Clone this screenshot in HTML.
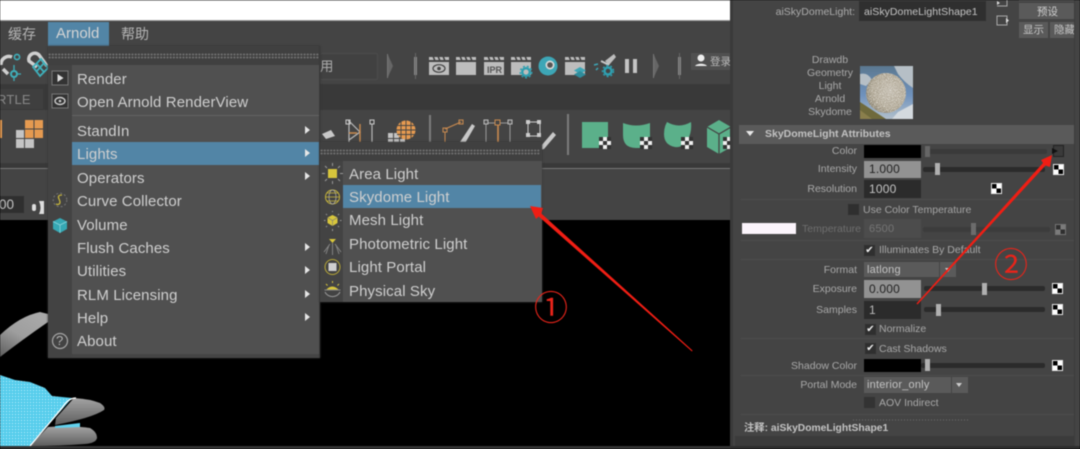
<!DOCTYPE html>
<html><head><meta charset="utf-8"><style>
html,body{margin:0;padding:0;background:#000}
#p{position:relative;width:1080px;height:449px;overflow:hidden;background:#444;font-family:"Liberation Sans","Noto Sans CJK SC",sans-serif;filter:blur(.5px)}
.a{position:absolute}
.t{position:absolute;white-space:nowrap;line-height:18px;height:18px}
.m{font-size:15px;color:#cfcfcf;left:77px;letter-spacing:.1px}
.s{font-size:15px;color:#cfcfcf;left:349px;letter-spacing:.1px}
.l{font-size:10.5px;color:#a8a8a8;right:223px;text-align:right}
.v{font-size:11px;color:#c4c4c4;letter-spacing:.2px}
.f{position:absolute;left:864px;width:57px;height:21px;background:#2b2b2b}
.tr{position:absolute;height:5px;background:#2b2b2b;border-radius:2px}
.h{position:absolute;width:5px;height:12px;background:#b0b0b0}
.ck{position:absolute;width:9px;height:9px;background:#fff;background-image:conic-gradient(#fff 25%,#000 25% 50%,#fff 50% 75%,#000 75%);background-size:9px 9px;outline:1px solid #e8e8e8}
.cb{position:absolute;width:11px;height:11px;background:#2f2f2f;border:0;color:#eee;font-size:10px;line-height:11px;text-align:center}
.ar{position:absolute;left:305px;width:0;height:0;border-left:5px solid #e6e6e6;border-top:4px solid transparent;border-bottom:4px solid transparent}
.sep{position:absolute;height:1px;background:#505050}
</style></head><body><div id="p">

<!-- top white bar -->
<div class="a" style="left:0;top:0;width:730px;height:21px;background:#fff"></div>
<div class="a" style="left:0;top:0;width:730px;height:1px;background:#c8c8c8"></div>
<div class="a" style="left:0;top:20px;width:730px;height:1px;background:#9a9a9a"></div>

<!-- maya bands -->
<div class="a" style="left:0;top:21px;width:730px;height:199px;background:#444"></div>
<div class="a" style="left:0;top:84px;width:730px;height:26px;background:#393939"></div>
<div class="a" style="left:0;top:110px;width:730px;height:53px;background:#444"></div>
<div class="a" style="left:0;top:163px;width:730px;height:5px;background:#393939"></div>
<div class="a" style="left:0;top:168px;width:730px;height:1px;background:#777"></div>
<div class="a" style="left:0;top:220px;width:730px;height:226px;background:#000"></div>
<div class="a" style="left:0;top:446px;width:730px;height:3px;background:#333"></div>

<!-- menu bar -->
<div class="t" style="left:8px;top:25px;font-size:14px;color:#b4b4b4">缓存</div>
<div class="a" style="left:48px;top:22px;width:61px;height:24px;background:#5285a6"></div>
<div class="t" style="left:56px;top:25px;font-size:15px;color:#d4d4d4">Arnold</div>
<div class="t" style="left:121px;top:25px;font-size:14px;color:#b4b4b4">帮助</div>

<!-- toolbar icons left -->
<svg class="a" style="left:0;top:50px" width="60" height="32" fill="none">
<path d="M1 15 A8 8 0 0 1 12 7" stroke="#cfcfcf" stroke-width="3.5"/><path d="M3 19 L8 24" stroke="#cfcfcf" stroke-width="3.5"/>
<circle cx="17" cy="7" r="2.6" stroke="#3fb0bb" stroke-width="1.6"/><circle cx="14" cy="24" r="3" stroke="#3fb0bb" stroke-width="2"/><path d="M14 15V20M18 24H21M14 28V31" stroke="#3fb0bb" stroke-width="1.3"/>
<path d="M37 17 L29 11 A6 6 0 0 1 39 5 L47 16" stroke="#cfcfcf" stroke-width="3.5" stroke-linejoin="round"/>
<path d="M33 17 L41 9 L48 18 L40 26 Z M36 13 L44 22 M44 13 L36 22" stroke="#3fb0bb" stroke-width="1.8"/>
</svg>
<div class="a" style="left:320px;top:53px;width:57px;height:25px;border:1px solid #4c4c4c;border-left:0;background:#414141;border-radius:2px"></div>
<div class="t" style="left:320px;top:58px;font-size:13.5px;color:#aaa">用</div>

<!-- toolbar icons right -->
<svg class="a" style="left:380px;top:46px" width="350" height="38">
<path d="M8 9 L13 20 L8 31Z" fill="#666"/><path d="M7.5 8V32" stroke="#777" stroke-width="1"/>
<rect x="34" y="11" width="3" height="18" fill="#8a8a8a"/><path d="M35.500 7V33" stroke="#666"/>
<rect x="49" y="16" width="20" height="13" fill="#bdbdbd"/><path d="M49 11h20v3H49z" fill="#bdbdbd"/><path d="M53 10l2 5M58 10l2 5M63 10l2 5" stroke="#444" stroke-width="1.6"/>
<ellipse cx="59" cy="22.500" rx="6" ry="3.800" fill="none" stroke="#444" stroke-width="1.2"/><circle cx="59" cy="22.500" r="1.800" fill="#444"/>
<rect x="76" y="16" width="20" height="13" fill="#bdbdbd"/><path d="M76 11h20v3H76z" fill="#bdbdbd"/><path d="M80 10l2 5M85 10l2 5M90 10l2 5" stroke="#444" stroke-width="1.6"/>
<rect x="104" y="16" width="20" height="13" fill="#bdbdbd"/><path d="M104 11h20v3h-20z" fill="#bdbdbd"/><path d="M108 10l2 5M113 10l2 5M118 10l2 5" stroke="#444" stroke-width="1.6"/>
<text x="107" y="27" font-size="9" font-weight="bold" fill="#555" font-family="Liberation Sans">IPR</text>
<rect x="131" y="16" width="20" height="13" fill="#bdbdbd"/><path d="M131 11h20v3h-20z" fill="#bdbdbd"/><path d="M135 10l2 5M140 10l2 5M145 10l2 5" stroke="#444" stroke-width="1.6"/>
<circle cx="146" cy="26" r="3.800" fill="none" stroke="#2f9fb0" stroke-width="2.400"/><circle cx="146" cy="26" r="5.800" fill="none" stroke="#2f9fb0" stroke-width="1.400" stroke-dasharray="2 2"/>
<circle cx="168" cy="20" r="9.500" fill="#3da6b6"/><circle cx="170" cy="19" r="4.500" fill="#d8d8d8"/><circle cx="170" cy="19" r="2.800" fill="#555"/>
<rect x="185" y="16" width="20" height="13" fill="#bdbdbd"/><path d="M185 11h20v3h-20z" fill="#bdbdbd"/><path d="M189 10l2 5M194 10l2 5M199 10l2 5" stroke="#444" stroke-width="1.6"/>
<path d="M200 21l6 3.500-6 3.500-6-3.500z" fill="#3da6b6"/><path d="M200 25l6 3.500-6 3.500-6-3.500z" fill="#2f8c9c"/>
<path d="M225 15l9-7 2 3-7 8z" fill="#bdbdbd"/><path d="M221 15l8 4" stroke="#c8c8c8" stroke-width="2"/>
<circle cx="228" cy="25" r="3.500" fill="none" stroke="#2f9fb0" stroke-width="2.400"/><circle cx="228" cy="25" r="5.500" fill="none" stroke="#2f9fb0" stroke-width="1.400" stroke-dasharray="2 2"/>
<path d="M214 19l4-1M216 24l2-2" stroke="#3da6b6" stroke-width="1.500"/>
<rect x="245" y="13" width="4" height="14" fill="#c4c4c4"/><rect x="253" y="13" width="4" height="14" fill="#c4c4c4"/>
<path d="M274 9 L279 20 L274 31Z" fill="#666"/><path d="M273.500 8V32" stroke="#777"/>
<rect x="298" y="11" width="3" height="18" fill="#8a8a8a"/><path d="M299.500 7V33" stroke="#666"/>
<rect x="311" y="7" width="39" height="17" fill="#505050"/>
<circle cx="321" cy="12" r="3.500" fill="#eee"/><path d="M315 20c2-3 10-3 12 0z" fill="#eee"/>
</svg>
<div class="t" style="left:710px;top:53px;font-size:10.5px;color:#bbb">登录</div>

<!-- second row -->
<div class="a" style="left:0;top:89px;width:43px;height:20px;background:#3f3f3f"></div>
<div class="t" style="left:-3px;top:91px;font-size:13px;color:#888;letter-spacing:.2px">RTLE</div>

<!-- shelf icons -->
<svg class="a" style="left:0;top:110px" width="730" height="56">
<rect x="-4" y="10" width="6" height="18" fill="#e59a50"/>
<g fill="#c4c4c4"><rect x="16" y="20" width="8" height="8"/><rect x="16" y="29" width="8" height="9"/><rect x="25" y="29" width="9" height="9"/></g>
<path d="M25 10h18v18H25z" fill="#e59a50"/><path d="M34 10v18M25 19h18" stroke="#444"/>
<path d="M322 24l9-4 4 6-9 3z" fill="#c8c8c8"/>
<path d="M348 11h1v23M349 11l11 11-11 8" stroke="#b8b8b8" stroke-width="1.200" fill="none"/>
<path d="M360 14v20M349 23h8" stroke="#c98a4f" stroke-width="1.400" fill="none"/>
<rect x="346" y="10" width="4" height="4" fill="none" stroke="#ccc"/><rect x="370" y="10" width="4" height="4" fill="none" stroke="#ccc"/>
<path d="M372 14v20" stroke="#b8b8b8" stroke-width="1.200"/>
<g fill="#c4c4c4"><rect x="388" y="23" width="5" height="5"/><rect x="394" y="23" width="5" height="5"/><rect x="388" y="29" width="5" height="5"/><rect x="394" y="29" width="5" height="5"/><rect x="400" y="29" width="5" height="5"/></g>
<circle cx="406" cy="20" r="9.500" fill="#e59a50"/><path d="M401 11.500V28.500M406 10.500V29.500M411 11.500V28.500M397 15.500H415M396.500 20H415.500M397 24.500H415" stroke="#444" stroke-width=".9"/>
<rect x="429" y="5" width="2" height="40" fill="#7c7c7c"/>
<path d="M445 19 L461 12" stroke="#c98a4f" stroke-width="1.200"/><rect x="443" y="18" width="4" height="4" fill="none" stroke="#c98a4f"/><rect x="459" y="10" width="4" height="4" fill="none" stroke="#c98a4f"/><path d="M445 22v12" stroke="#c98a4f"/>
<path d="M460 32L472 14l3 2-11 19-9 2z" fill="#c8c8c8"/>
<path d="M486 13H508M486 13V38M510 13V38" stroke="#999" stroke-width="1"/><path d="M498 13v25" stroke="#c98a4f" stroke-width="1.600"/>
<rect x="484" y="10" width="4" height="4" fill="#555" stroke="#bbb"/><rect x="495" y="10" width="5" height="5" fill="#444" stroke="#c98a4f"/><rect x="508" y="10" width="4" height="4" fill="#555" stroke="#bbb"/>
<path d="M528 12h12M528 12v14M540 12v14M528 26h12" stroke="#ccc"/><rect x="526" y="10" width="4" height="4" fill="#ccc"/><rect x="537" y="10" width="4" height="4" fill="#ccc"/><rect x="526" y="23" width="4" height="4" fill="#ccc"/><rect x="537" y="23" width="4" height="4" fill="#ccc"/>
<path d="M541 36l12-14 3 3-12 14-4 1z" fill="#c8c8c8"/>
<rect x="567" y="4" width="2" height="41" fill="#7c7c7c"/>
<path d="M582 12h26v26h-26z" fill="#5bb08a"/>
<path d="M623 13q13 5 27 0v25h-14q-13 0-13-13z" fill="#5bb08a"/>
<path d="M667 12q12 7 24 0 1 10-3 17-5 9-13 8-11-2-11-13 0-7 3-12z" fill="#5bb08a"/>
<path d="M707 17l12-7 12 7v20l-12 7-12-7z" fill="#5bb08a"/><path d="M707 17l12 7 12-7M719 24v20" stroke="#444" stroke-width="1.300" fill="none"/>
<rect x="599" y="27" width="12" height="12" fill="#eee"/><path d="M599 27h4v4h-4zM607 27h4v4h-4zM603 31h4v4h-4zM599 35h4v4h-4zM607 35h4v4h-4z" fill="#333"/>
<rect x="640" y="27" width="12" height="12" fill="#eee"/><path d="M640 27h4v4h-4zM648 27h4v4h-4zM644 31h4v4h-4zM640 35h4v4h-4zM648 35h4v4h-4z" fill="#333"/>
<rect x="681" y="27" width="12" height="12" fill="#eee"/><path d="M681 27h4v4h-4zM689 27h4v4h-4zM685 31h4v4h-4zM681 35h4v4h-4zM689 35h4v4h-4z" fill="#333"/>
<rect x="723" y="27" width="7" height="12" fill="#eee"/><path d="M723 27h4v4h-4zM727 31h3v4h-3zM723 35h4v4h-4z" fill="#333"/>
</svg>

<!-- time row -->
<div class="a" style="left:0;top:196px;width:24px;height:17px;background:#2f2f2f"></div>
<div class="t" style="left:-1px;top:196px;font-size:13.500px;color:#c4c4c4">00</div>
<svg class="a" style="left:30px;top:200px" width="16" height="16"><path d="M9 1h5v13H9q3-6 0-13z" fill="#ddd"/><rect x="2" y="4" width="4" height="7" fill="#ddd" rx="2"/></svg>

<!-- hand -->
<svg class="a" style="left:0;top:300px" width="110" height="146">
<defs>
<linearGradient id="f0" x1="0" y1="1" x2=".6" y2="0"><stop offset="0" stop-color="#5c5c5c"/><stop offset=".55" stop-color="#9e9e9e"/><stop offset="1" stop-color="#a8a8a8"/></linearGradient>
<linearGradient id="f1" x1="0" y1="0" x2="0" y2="1"><stop offset="0" stop-color="#a4a4a4"/><stop offset="1" stop-color="#5e5e5e"/></linearGradient>
<pattern id="dots" width="3" height="3" patternUnits="userSpaceOnUse"><rect width="3" height="3" fill="#56cdec"/><rect width="1" height="1" fill="#bdeefa"/></pattern>
</defs>
<path d="M0 35Q20 16 40 12L48 14V22Q22 40 0 57Z" fill="url(#f0)"/>
<path d="M74 98Q90 99 100 103Q106 107 104 110Q92 118 55 125L56 118Z" fill="url(#f1)"/>
<path d="M48 127Q70 125 90 128Q97 132 97 138Q96 143 85 144Q60 146 30 146Z" fill="url(#f1)"/>
<path d="M0 75L15 80 30 82 45 88 52 96 72 98 30 146H0Z" fill="url(#dots)"/>
<path d="M76 98Q68 98 62 108L30 146" stroke="#fff" stroke-width="1.300" fill="none"/>
<path d="M55 126L80 123V127L55 128Z" fill="#62d2ee"/>
</svg>

<!-- main menu -->
<div class="a" style="left:48px;top:46px;width:272px;height:312px;background:#505050;box-shadow:0 0 2px #333"></div>
<div class="a" style="left:48px;top:46px;width:272px;height:19px;background:#404040"></div>
<div class="a" style="left:48px;top:53px;width:272px;height:6px;background-image:radial-gradient(circle,#6e6e6e 1px,transparent 1.100px);background-size:3.200px 3px"></div>
<div class="a" style="left:48px;top:65px;width:24px;height:293px;background:#434343"></div>
<div class="a" style="left:72px;top:354px;width:248px;height:4px;background:#454545"></div>
<div class="a" style="left:72px;top:142px;width:247px;height:23px;background:#5285a6"></div>
<div class="sep" style="left:72px;top:115px;width:248px;background:#636363"></div>
<div class="a" style="left:319px;top:46px;width:1px;height:312px;background:#3a3a3a"></div>
<div class="t m" style="top:71px">Render</div>
<div class="t m" style="top:94px">Open Arnold RenderView</div>
<div class="t m" style="top:123px">StandIn</div>
<div class="t m" style="top:146px">Lights</div>
<div class="t m" style="top:170px">Operators</div>
<div class="t m" style="top:193px">Curve Collector</div>
<div class="t m" style="top:217px">Volume</div>
<div class="t m" style="top:240px">Flush Caches</div>
<div class="t m" style="top:263px">Utilities</div>
<div class="t m" style="top:287px">RLM Licensing</div>
<div class="t m" style="top:310px">Help</div>
<div class="t m" style="top:333px">About</div>
<div class="ar" style="top:126px"></div><div class="ar" style="top:149px"></div><div class="ar" style="top:172px"></div>
<div class="ar" style="top:243px"></div><div class="ar" style="top:266px"></div><div class="ar" style="top:290px"></div><div class="ar" style="top:313px"></div>
<svg class="a" style="left:48px;top:65px" width="24" height="290" fill="none">
<rect x="4" y="6" width="16" height="14" fill="#333" stroke="#777"/><path d="M9.500 9l6 4-6 4z" fill="#ddd"/>
<rect x="4" y="29" width="16" height="14" fill="#333" stroke="#777"/><ellipse cx="12" cy="36" rx="5" ry="3.500" stroke="#ccc" stroke-width="1.400"/><circle cx="12" cy="36" r="1.300" fill="#ccc"/>
<circle cx="12" cy="135" r="6.800" stroke="#777" stroke-dasharray="2 2"/><path d="M14 130q-5 0-3 4t0 5q-1 1-3 0" stroke="#c6b53c" stroke-width="1.300"/>
<path d="M12 153l7 3.500v7.500l-7 4-7-4v-7.500z" fill="#36a8b4"/><path d="M5 156.500l7 3.500 7-3.500M12 160v8" stroke="#8ad5dc" stroke-width=".8"/>
<circle cx="12" cy="276" r="7.500" stroke="#a6a6a6" stroke-width="1.200"/>
</svg>
<div class="t" style="left:56px;top:332px;width:8px;font-size:13px;color:#b4b4b4">?</div>

<!-- submenu -->
<div class="a" style="left:320px;top:142px;width:222px;height:160px;background:#505050;box-shadow:0 0 2px #333"></div>
<div class="a" style="left:320px;top:142px;width:222px;height:19px;background:#404040"></div>
<div class="a" style="left:320px;top:149px;width:220px;height:6px;background-image:radial-gradient(circle,#6e6e6e 1px,transparent 1.100px);background-size:3.200px 3px"></div>
<div class="a" style="left:320px;top:161px;width:23px;height:141px;background:#434343"></div>
<div class="a" style="left:343px;top:185px;width:198px;height:23px;background:#5285a6"></div>
<div class="t s" style="top:166px">Area Light</div>
<div class="t s" style="top:189px">Skydome Light</div>
<div class="t s" style="top:212px">Mesh Light</div>
<div class="t s" style="top:236px">Photometric Light</div>
<div class="t s" style="top:259px">Light Portal</div>
<div class="t s" style="top:283px">Physical Sky</div>
<svg class="a" style="left:320px;top:161px" width="24" height="141" fill="none">
<rect x="8" y="8" width="9" height="9" fill="#d8c63c"/><path d="M12.500 2v3M12.500 20v3M2 12.500h3M20 12.500h3M5 5l2 2M20 5l-2 2M5 20l2-2M20 20l-2-2" stroke="#999"/>
<circle cx="12.500" cy="36" r="7" stroke="#c6b53c"/><ellipse cx="12.500" cy="36" rx="3.500" ry="7" stroke="#aaa" stroke-width=".8"/><path d="M5.500 36h14M7 32h11M7 40h11" stroke="#c6b53c" stroke-width=".8"/>
<path d="M12.500 54l5 2.500v5.500l-5 3-5-3v-5.500z" fill="#d8c63c"/><path d="M7.500 56.500l5 3 5-3M12.500 59.500v5.500" stroke="#777" stroke-width=".6"/><path d="M12.500 50v1M12.500 68v2M4 59.500h1.500M20 59.500h1.500M6 53l1 1M19 53l-1 1M6 66l1-1M19 66l-1-1" stroke="#999"/>
<path d="M9 78h7l-3.500 4z" fill="#d8c63c"/><path d="M12.500 82V94M10 83L4 91M15 83l6 8M9 84l-3 9M16 84l3 9" stroke="#888" stroke-width=".9"/>
<circle cx="12.500" cy="106" r="7.500" stroke="#b8a838"/><rect x="8.500" y="102" width="8" height="8" fill="#d0d0d0"/>
<path d="M6 129q6-7 13 0z" fill="#d8c63c"/><path d="M5 131a8 7 0 0 0 15 0" stroke="#999"/><path d="M4.500 129h16" stroke="#888"/><path d="M12.500 120v2M6 123l1.500 1.500M19 123l-1.500 1.500" stroke="#d8c63c"/>
</svg>

<!-- right panel -->
<div class="a" style="left:730px;top:0;width:350px;height:449px;background:#444"></div>
<div class="a" style="left:730px;top:0;width:3px;height:449px;background:#3a3a3a"></div>
<div class="a" style="left:1074px;top:0;width:1px;height:449px;background:#3c3c3c"></div>
<div class="a" style="left:735px;top:436px;width:339px;height:10px;background:#3b3b3b"></div>
<div class="a" style="left:730px;top:446px;width:350px;height:3px;background:#2e2e2e"></div>

<div class="t" style="right:225px;top:3px;font-size:10.500px;color:#ababab">aiSkyDomeLight:</div>
<div class="a" style="left:859px;top:1px;width:127px;height:20px;background:#2f2f2f"></div>
<div class="t" style="left:864px;top:3px;font-size:10.500px;color:#c4c4c4;letter-spacing:.05px">aiSkyDomeLightShape1</div>
<svg class="a" style="left:995px;top:0" width="20" height="30" fill="none"><path d="M2-1h10v7H2" stroke="#aaa"/><path d="M2 1l3 2-3 2z" fill="#ddd"/><rect x="2" y="16" width="10" height="9" stroke="#aaa"/><path d="M11 18l3 2.500-3 2.500z" fill="#ddd"/></svg>
<div class="a" style="left:1019px;top:3px;width:55px;height:16px;background:#5a5a5a"></div>
<div class="a" style="left:1019px;top:0;width:55px;height:1px;background:#5a5a5a"></div>
<div class="t" style="left:1037px;top:3px;font-size:10.500px;color:#d0d0d0">预设</div>
<div class="a" style="left:1019px;top:22px;width:29px;height:16px;background:#5a5a5a"></div>
<div class="a" style="left:1050px;top:22px;width:24px;height:16px;background:#5a5a5a"></div>
<div class="t" style="left:1023px;top:21px;font-size:10.500px;color:#c8c8c8">显示</div>
<div class="a" style="left:1054px;top:21px;width:20px;height:18px;overflow:hidden"><div class="t" style="left:0;top:0;font-size:10.500px;color:#c8c8c8">隐藏</div></div>

<div class="t l" style="right:220px;top:51px;width:60px;text-align:center">Drawdb</div>
<div class="t l" style="right:220px;top:64px;width:60px;text-align:center">Geometry</div>
<div class="t l" style="right:220px;top:77px;width:60px;text-align:center">Light</div>
<div class="t l" style="right:220px;top:90px;width:60px;text-align:center">Arnold</div>
<div class="t l" style="right:220px;top:103px;width:60px;text-align:center">Skydome</div>

<svg class="a" style="left:860px;top:66px" width="53" height="53">
<defs><linearGradient id="sky" x1="0" y1="0" x2="0" y2="1"><stop offset="0" stop-color="#5b7890"/><stop offset=".55" stop-color="#6f92bd"/><stop offset="1" stop-color="#b2c0cc"/></linearGradient>
<radialGradient id="sph" cx=".6" cy=".45" r=".6"><stop offset="0" stop-color="#bdb6a8"/><stop offset=".75" stop-color="#a89f8c"/><stop offset="1" stop-color="#857d6a"/></radialGradient>
<filter id="sp" x="0" y="0" width="100%" height="100%"><feTurbulence type="fractalNoise" baseFrequency="1.100" numOctaves="2" seed="3"/><feColorMatrix values="0 0 0 0 .95 0 0 0 0 .93 0 0 0 0 .88 0 0 0 2.400 -1.050"/><feComposite in2="SourceGraphic" operator="in"/></filter></defs>
<rect width="53" height="53" fill="url(#sky)"/>
<path d="M0 8Q8 6 12 14L6 20 0 18ZM34 0H53V22Q44 16 38 8Z" fill="#b6bfc6"/>
<path d="M0 36L26 53H0Z" fill="#6f6a3c"/><path d="M0 44L12 53H0Z" fill="#8a7f4c"/>
<path d="M38 46L53 38V53H32Z" fill="#d4dadf"/>
<circle cx="26" cy="27" r="20" fill="url(#sph)"/>
<circle cx="26" cy="27" r="20" fill="#fff" filter="url(#sp)"/>
</svg>

<div class="a" style="left:739px;top:125px;width:335px;height:19px;background:#5a5a5a"></div>
<div class="a" style="left:746px;top:131px;width:0;height:0;border-left:4px solid transparent;border-right:4px solid transparent;border-top:5px solid #e8e8e8"></div>
<div class="t" style="left:765px;top:125px;font-size:10.500px;font-weight:bold;color:#c2c2c2">SkyDomeLight Attributes</div>

<!-- section frame lines -->
<div class="sep" style="left:741px;top:199px;width:333px;background:#4d4d4d"></div>
<div class="sep" style="left:741px;top:240px;width:333px;background:#4d4d4d"></div>
<div class="sep" style="left:741px;top:259px;width:333px;background:#4d4d4d"></div>
<div class="sep" style="left:741px;top:338px;width:333px;background:#4d4d4d"></div>
<div class="sep" style="left:741px;top:375px;width:333px;background:#4d4d4d"></div>
<div class="sep" style="left:741px;top:414px;width:333px;background:#4d4d4d"></div>

<!-- Color -->
<div class="t l" style="top:142px">Color</div>
<div class="f" style="left:864px;top:145px;height:13px;background:#000"></div>
<div class="tr" style="left:925px;top:149px;height:5px;background:#3a3a3a;width:122px"></div>
<div class="h" style="left:925px;top:146px;background:#666;height:11px"></div>
<svg class="a" style="left:1050px;top:145px" width="16" height="14" fill="none"><rect x="3.500" y=".5" width="10" height="11" fill="#3a3a3a" stroke="#222"/><path d="M2 3l6 3-6 3z" fill="#111"/></svg>
<!-- Intensity -->
<div class="t l" style="top:160px">Intensity</div>
<div class="f" style="top:161px;height:17px;background:#929292"></div>
<div class="t v" style="left:869px;top:160px;font-size:12px;color:#222">1.000</div>
<div class="tr" style="left:923px;top:167px;width:122px"></div>
<div class="h" style="left:935px;top:163px"></div>
<div class="ck" style="left:1054px;top:165px"></div>
<!-- Resolution -->
<div class="t l" style="top:180px">Resolution</div>
<div class="f" style="top:180px;height:18px"></div>
<div class="t v" style="left:869px;top:180px;font-size:12px">1000</div>
<div class="ck" style="left:992px;top:184px"></div>
<!-- Temp -->
<div class="cb" style="left:848px;top:204px"></div>
<div class="t" style="left:863px;top:201px;font-size:10.500px;color:#a4a4a4">Use Color Temperature</div>
<div class="a" style="left:742px;top:223px;width:54px;height:11px;background:#fbf4fb"></div>
<div class="t l" style="right:219px;top:220px;color:#6e6e6e">Temperature</div>
<div class="f" style="top:219px;height:19px;background:#4c4c4c"></div>
<div class="t v" style="left:869px;top:220px;color:#757575">6500</div>
<div class="tr" style="left:923px;top:227px;width:127px;background:#3c3c3c"></div>
<div class="h" style="left:971px;top:223px;background:#6c6c6c"></div>
<div class="ck" style="left:1056px;top:225px;opacity:.3"></div>
<!-- Illuminates -->
<div class="cb" style="left:864px;top:245px">✔</div>
<div class="t" style="left:879px;top:241px;font-size:10.500px;color:#a8a8a8">Illuminates By Default</div>
<!-- Format -->
<div class="t l" style="top:261px">Format</div>
<div class="a" style="left:864px;top:262px;width:75px;height:15px;background:#5a5a5a"></div>
<div class="a" style="left:939px;top:262px;width:1px;height:15px;background:#444"></div>
<div class="a" style="left:940px;top:262px;width:16px;height:15px;background:#5a5a5a"></div>
<div class="a" style="left:945px;top:268px;border-left:3.500px solid transparent;border-right:3.500px solid transparent;border-top:4px solid #ccc"></div>
<div class="t v" style="left:867px;top:261px">latlong</div>
<!-- Exposure -->
<div class="t l" style="top:280px">Exposure</div>
<div class="f" style="top:280px;height:18px;background:#929292"></div>
<div class="t v" style="left:869px;top:280px;font-size:12px;color:#222">0.000</div>
<div class="tr" style="left:924px;top:286px;width:121px"></div>
<div class="h" style="left:982px;top:283px"></div>
<div class="ck" style="left:1053px;top:284px"></div>
<!-- Samples -->
<div class="t l" style="top:301px">Samples</div>
<div class="f" style="top:301px;height:18px"></div>
<div class="t v" style="left:869px;top:301px;font-size:12px;color:#bbb">1</div>
<div class="tr" style="left:924px;top:307px;width:121px"></div>
<div class="h" style="left:936px;top:304px"></div>
<div class="ck" style="left:1053px;top:305px"></div>
<!-- Normalize -->
<div class="cb" style="left:865px;top:324px">✔</div>
<div class="t" style="left:879px;top:320px;font-size:10.500px;color:#a8a8a8">Normalize</div>
<!-- Cast -->
<div class="cb" style="left:865px;top:343px">✔</div>
<div class="t" style="left:879px;top:340px;font-size:10.500px;color:#a8a8a8">Cast Shadows</div>
<!-- Shadow -->
<div class="t l" style="top:357px">Shadow Color</div>
<div class="f" style="top:359px;height:13px;background:#000"></div>
<div class="tr" style="left:921px;top:363px;width:124px"></div>
<div class="h" style="left:925px;top:359px;height:12px"></div>
<div class="ck" style="left:1053px;top:361px"></div>
<!-- Portal -->
<div class="t l" style="top:376px">Portal Mode</div>
<div class="a" style="left:864px;top:377px;width:87px;height:16px;background:#5a5a5a"></div>
<div class="a" style="left:951px;top:377px;width:1px;height:16px;background:#444"></div>
<div class="a" style="left:952px;top:377px;width:16px;height:16px;background:#5a5a5a"></div>
<div class="a" style="left:956px;top:383px;border-left:3.500px solid transparent;border-right:3.500px solid transparent;border-top:4px solid #ccc"></div>
<div class="t v" style="left:867px;top:376px">interior_only</div>
<!-- AOV -->
<div class="cb" style="left:864px;top:397px;background:#333"></div>
<div class="t" style="left:879px;top:394px;font-size:10.500px;color:#a8a8a8">AOV Indirect</div>
<!-- footer -->
<div class="a" style="left:852px;top:419px;width:118px;height:2px;background-image:radial-gradient(circle,#6a6a6a .7px,transparent .8px);background-size:3px 2px"></div>
<div class="t" style="left:744px;top:420px;font-size:10.300px;font-weight:bold;color:#c4c4c4">注释:&nbsp;aiSkyDomeLightShape1</div>

<!-- annotations -->
<svg class="a" style="left:0;top:0" width="1080" height="449">
<path d="M530 206 L543 208 L541.300 213.500 L692.500 350.500 L692 351.500 L538.700 216.500 L536 219 Z" fill="#f01e14"/>
<path d="M1052 155 L1050 167 L1045.500 165.500 L917.500 304.500 L916.500 303.500 L1043 163 L1041 160 Z" fill="#f01e14"/>
</svg>
<div class="t" style="left:533px;top:289px;width:36px;height:34px;line-height:34px;text-align:center;font-size:34px;color:#e8241a;font-family:'Noto Sans CJK SC',sans-serif">①</div>
<div class="t" style="left:993px;top:246px;width:36px;height:34px;line-height:34px;text-align:center;font-size:34px;color:#e8241a;font-family:'Noto Sans CJK SC',sans-serif">②</div>

</div></body></html>
